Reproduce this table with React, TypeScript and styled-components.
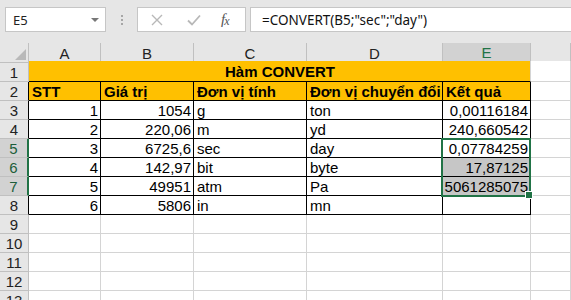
import styled, { createGlobalStyle } from "styled-components";

const GREEN = "#217346";
const GRID = "#d4d4d4";
const HEAD_LINE = "#c0c0c0";
const COLS = "29px 72px 93px 113px 136px 88px 1fr";

const GlobalStyle = createGlobalStyle`
  html, body {
    margin: 0;
    padding: 0;
    background: #ffffff;
    overflow: hidden;
  }
  body {
    font-family: "Liberation Sans", Arial, sans-serif;
  }
`;

const Page = styled.div`
  width: 571px;
  height: 300px;
  overflow: hidden;
  background: #ffffff;
`;

/* formula bar */
const Toolbar = styled.div`
  height: 43px;
  background: #e6e6e6;
  display: flex;
  align-items: flex-start;
  padding: 7px 0 0 5px;
  box-sizing: border-box;
  font-family: "Noto Sans", "Open Sans", sans-serif;
`;

const NameBox = styled.div`
  width: 101px;
  height: 25px;
  box-sizing: border-box;
  background: #fff;
  border: 1px solid #c6c6c6;
  display: flex;
  align-items: center;
  justify-content: space-between;
  padding: 0 6px 0 7px;
  font-size: 13px;
  color: #222;
`;

const DropArrow = styled.span`
  width: 0;
  height: 0;
  border-left: 4px solid transparent;
  border-right: 4px solid transparent;
  border-top: 4px solid #777;
  margin-top: 1px;
`;

const Grip = styled.div`
  width: 31px;
  height: 25px;
  display: flex;
  flex-direction: column;
  align-items: center;
  justify-content: center;
  gap: 2px;
  span {
    width: 2px;
    height: 2px;
    background: #a6a6a6;
  }
`;

const ButtonBox = styled.div`
  width: 109px;
  height: 25px;
  box-sizing: border-box;
  background: #fff;
  border: 1px solid #c6c6c6;
  display: flex;
  align-items: center;
  padding-left: 13px;
  gap: 0;
`;

const BarButton = styled.div<{ $w: number }>`
  width: ${(p) => p.$w}px;
  height: 23px;
  display: flex;
  align-items: center;
`;

const Fx = styled.span`
  font-family: "Liberation Serif", "DejaVu Serif", serif;
  font-style: italic;
  font-size: 15px;
  color: #555;
  letter-spacing: -1px;
  sub {
    font-size: 12px;
    vertical-align: -1px;
  }
`;

const FormulaInput = styled.div`
  flex: 1;
  height: 25px;
  margin-left: 4px;
  box-sizing: border-box;
  background: #fff;
  border: 1px solid #c6c6c6;
  border-right: none;
  display: flex;
  align-items: center;
  padding-left: 11px;
  font-size: 13.5px;
  color: #111;
  white-space: nowrap;
`;

/* sheet */
const Row = styled.div<{ $h: number }>`
  display: grid;
  grid-template-columns: ${COLS};
  height: ${(p) => p.$h}px;
`;

const ColHead = styled.div<{ $active?: boolean }>`
  box-sizing: border-box;
  background: ${(p) => (p.$active ? "#d2d2d2" : "#e6e6e6")};
  border-right: 1px solid ${HEAD_LINE};
  border-bottom: ${(p) => (p.$active ? `2px solid ${GREEN}` : `1px solid ${HEAD_LINE}`)};
  color: ${(p) => (p.$active ? GREEN : "#222")};
  font-size: 15px;
  display: flex;
  align-items: center;
  justify-content: center;
  padding-top: 1px;
`;

const Corner = styled(ColHead)`
  position: relative;
  &::after {
    content: "";
    position: absolute;
    right: 2px;
    bottom: 2px;
    width: 0;
    height: 0;
    border-left: 11px solid transparent;
    border-bottom: 11px solid #b9b9b9;
  }
`;

const RowHead = styled.div<{ $active?: boolean; $edge?: boolean }>`
  box-sizing: border-box;
  background: ${(p) => (p.$active ? "#d2d2d2" : "#e6e6e6")};
  border-bottom: 1px solid ${HEAD_LINE};
  border-right: ${(p) =>
    p.$active ? `2px solid ${GREEN}` : `1px solid ${p.$edge ? "#000" : HEAD_LINE}`};
  color: ${(p) => (p.$active ? "#1d5e3a" : "#222")};
  font-size: 15px;
  display: flex;
  align-items: flex-end;
  justify-content: center;
  line-height: 17px;
`;

const Cell = styled.div<{
  $right?: boolean;
  $bold?: boolean;
  $fill?: string;
  $boxed?: boolean;
}>`
  position: relative;
  box-sizing: border-box;
  background: ${(p) => p.$fill ?? "#fff"};
  border-right: 1px solid ${(p) => (p.$boxed ? "#000" : GRID)};
  border-bottom: 1px solid ${(p) => (p.$boxed ? "#000" : GRID)};
  font-size: 15px;
  line-height: 17px;
  font-weight: ${(p) => (p.$bold ? 700 : 400)};
  color: #000;
  display: flex;
  align-items: flex-end;
  justify-content: ${(p) => (p.$right ? "flex-end" : "flex-start")};
  padding: 0 2px 0 3px;
  white-space: nowrap;
  overflow: visible;
`;

const Title = styled(Cell)`
  grid-column: span 5;
  justify-content: center;
  border-right-color: ${GRID};
  border-bottom-color: #000;
  padding-bottom: 1px;
`;

const Selection = styled.div`
  position: absolute;
  top: -1px;
  left: -2px;
  width: 90px;
  height: 59px;
  box-sizing: border-box;
  border: 2px solid ${GREEN};
  z-index: 2;
  pointer-events: none;
`;

const FillHandle = styled.span`
  position: absolute;
  right: -4px;
  bottom: -4px;
  width: 6px;
  height: 6px;
  background: ${GREEN};
  border: 1px solid #fff;
`;

const ORANGE = "#ffc000";
const SELECTED = "#c6c6c6";

type Line = [string, string, string, string, string];

const data: Line[] = [
  ["1", "1054", "g", "ton", "0,00116184"],
  ["2", "220,06", "m", "yd", "240,660542"],
  ["3", "6725,6", "sec", "day", "0,07784259"],
  ["4", "142,97", "bit", "byte", "17,87125"],
  ["5", "49951", "atm", "Pa", "5061285075"],
  ["6", "5806", "in", "mn", ""],
];

const headers = ["STT", "Giá trị", "Đơn vị tính", "Đơn vị chuyển đổi", "Kết quả"];

const CrossIcon = () => (
  <svg width="12" height="12" viewBox="0 0 12 12">
    <path d="M1 1 L11 11 M11 1 L1 11" stroke="#b8b8b8" strokeWidth="1.4" fill="none" />
  </svg>
);

const CheckIcon = () => (
  <svg width="14" height="12" viewBox="0 0 14 12">
    <path d="M1 6.5 L5 10.5 L13 1.5" stroke="#b8b8b8" strokeWidth="1.8" fill="none" />
  </svg>
);

export default function App() {
  return (
    <Page>
      <GlobalStyle />
      <Toolbar>
        <NameBox>
          <span>E5</span>
          <DropArrow />
        </NameBox>
        <Grip>
          <span />
          <span />
          <span />
        </Grip>
        <ButtonBox>
          <BarButton $w={36}>
            <CrossIcon />
          </BarButton>
          <BarButton $w={34}>
            <CheckIcon />
          </BarButton>
          <BarButton $w={24}>
            <Fx>
              f<sub>x</sub>
            </Fx>
          </BarButton>
        </ButtonBox>
        <FormulaInput>=CONVERT(B5;"sec";"day")</FormulaInput>
      </Toolbar>

      <Row $h={18}>
        <Corner />
        {["A", "B", "C", "D", "E", ""].map((c) => (
          <ColHead key={c || "F"} $active={c === "E"}>
            {c}
          </ColHead>
        ))}
      </Row>

      <Row $h={21}>
        <RowHead>1</RowHead>
        <Title $bold $fill={ORANGE}>
          Hàm CONVERT
        </Title>
        <Cell />
      </Row>

      <Row $h={19}>
        <RowHead $edge>2</RowHead>
        {headers.map((h) => (
          <Cell key={h} $bold $boxed $fill={ORANGE}>
            {h}
          </Cell>
        ))}
        <Cell />
      </Row>

      {data.map((line, i) => {
        const n = i + 3;
        const active = n >= 5 && n <= 7;
        return (
          <Row key={n} $h={19}>
            <RowHead $edge $active={active}>
              {n}
            </RowHead>
            <Cell $boxed $right>
              {line[0]}
            </Cell>
            <Cell $boxed $right>
              {line[1]}
            </Cell>
            <Cell $boxed>{line[2]}</Cell>
            <Cell $boxed>{line[3]}</Cell>
            <Cell $boxed $right $fill={n === 6 || n === 7 ? SELECTED : undefined}>
              {line[4]}
              {n === 5 && (
                <Selection>
                  <FillHandle />
                </Selection>
              )}
            </Cell>
            <Cell />
          </Row>
        );
      })}

      {[9, 10, 11, 12, 13].map((n) => (
        <Row key={n} $h={19}>
          <RowHead>{n}</RowHead>
          <Cell />
          <Cell />
          <Cell />
          <Cell />
          <Cell />
          <Cell />
        </Row>
      ))}
    </Page>
  );
}
